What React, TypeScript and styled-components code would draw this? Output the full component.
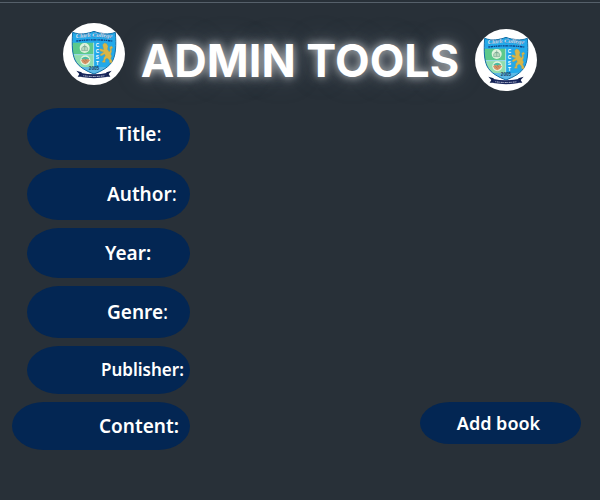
import React, { useId } from "react";
import styled, { createGlobalStyle } from "styled-components";

const GlobalStyle = createGlobalStyle`
  * { box-sizing: border-box; }
  body {
    margin: 0;
    background: #283038;
    color: #fff;
    font-family: "Noto Sans", "Open Sans", sans-serif;
  }
`;

const Page = styled.main`
  min-height: 100vh;
  padding-top: 2px;
`;

const TopRule = styled.hr`
  height: 1px;
  margin: 0;
  border: 0;
  background: #56606a;
`;

const Header = styled.header`
  display: flex;
  justify-content: space-between;
  align-items: flex-start;
  padding: 20px 63px 0;
  height: 105px;
`;

const Logo = styled.svg<{ $drop?: number }>`
  flex: none;
  width: 62px;
  height: 62px;
  margin-top: ${(p) => p.$drop ?? 0}px;
`;

const Title = styled.h1`
  margin: 10px 0 0;
  font-family: Inter, "Liberation Sans", sans-serif;
  font-size: 45px;
  line-height: 56px;
  font-weight: 700;
  white-space: nowrap;
  text-shadow: 0 0 8px rgba(255, 255, 255, 0.6), 0 0 16px rgba(255, 255, 255, 0.3),
    0 0 30px rgba(160, 180, 205, 0.25);
`;

const Form = styled.form`
  display: flex;
  justify-content: space-between;
  align-items: flex-end;
  padding-right: 19px;
`;

const Fields = styled.div`
  flex: 1;
  min-width: 0;
  display: flex;
  flex-direction: column;
  gap: 8px;
`;

const Row = styled.div<{ $wide?: boolean }>`
  display: flex;
  padding-left: ${(p) => (p.$wide ? 12 : 27)}px;
`;

const Label = styled.label<{ $wide?: boolean; $height: number; $indent: number; $size: number }>`
  flex: none;
  display: flex;
  align-items: center;
  width: ${(p) => (p.$wide ? 178 : 163)}px;
  height: ${(p) => p.$height}px;
  padding-left: ${(p) => p.$indent}px;
  border-radius: 32px / 50%;
  background: #032653;
  font-size: ${(p) => p.$size}px;
  line-height: 24px;
  font-weight: 600;
  white-space: nowrap;
`;

const Colon = styled.span<{ $light?: boolean }>`
  font-weight: ${(p) => (p.$light ? 400 : 600)};
`;

const Field = styled.input`
  flex: 1;
  width: 0;
  min-width: 0;
  padding: 0 16px;
  border: 0;
  outline: 0;
  background: transparent;
  color: inherit;
  font: inherit;
`;

const AddButton = styled.button`
  flex: none;
  width: 161px;
  height: 42px;
  margin-bottom: 6px;
  padding: 0 4px 0 0;
  border: 0;
  border-radius: 30px / 50%;
  background: #032653;
  color: #fff;
  font: 600 18px/24px "Noto Sans", "Open Sans", sans-serif;
  cursor: pointer;
`;

const SHIELD =
  "M51 51 C72 59 94 56 115 48 C136 56 158 59 179 51 C182 92 180 116 172 134 C162 155 138 167 115 176 C92 167 68 155 58 134 C50 116 48 92 51 51 Z";

function CollegeLogo({ drop }: { drop?: number }) {
  const id = useId().replace(/[^a-zA-Z0-9]/g, "");
  return (
    <Logo $drop={drop} viewBox="22 23 186 186" role="img" aria-label="Clark College">
      <defs>
        <clipPath id={`${id}s`}>
          <path d={SHIELD} />
        </clipPath>
        <path id={`${id}a`} d="M50 70 Q115 60 180 70" />
      </defs>
      <circle cx="115" cy="116" r="93" fill="#fff" />
      <g clipPath={`url(#${id}s)`}>
        <rect x="45" y="45" width="140" height="135" fill="#23a9ea" />
        <path d="M45 82h69v35H45z" fill="#5cc98b" />
        <path d="M45 119h69v60H45z" fill="#8fdcae" />
        <path d="M114 82v72M45 118h69" stroke="#e5f6ef" strokeWidth="2" fill="none" />
        <path d="M48 152Q115 160 184 152V180H48z" fill="#5eb9e6" />
      </g>
      <path d={SHIELD} fill="none" stroke="#176fa5" strokeWidth="3" />
      <text fill="#fff" stroke="#174d91" strokeWidth=".5" fontFamily="Liberation Serif, serif" fontSize="19" fontWeight="700" fontStyle="italic">
        <textPath href={`#${id}a`} startOffset="50%" textAnchor="middle">
          Clark College
        </textPath>
      </text>
      <path d="M62 77Q115 70 170 77" fill="none" stroke="#123f80" strokeWidth="4" strokeDasharray="5 2 8 2 3 2" />
      <circle cx="87" cy="98" r="15" fill="#dff3dc" />
      <path d="M78 98q9-12 18 0v8H78zM81 94h12M87 87v18" fill="#b9d9bd" stroke="#699b86" strokeWidth="1.5" />
      <circle cx="89" cy="135" r="15" fill="#e5f3dc" />
      <path d="M77 130q12-11 24 0l-4 5H81z" fill="#47bba4" />
      <path d="M76 135l8-5 5 3 6-3 8 5-7 8-7 4-8-4z" fill="#d79366" />
      <path d="M83 135l7 6M88 133l7 5" stroke="#956344" strokeWidth="1.5" />
      <g fill="#fff" fontFamily="Liberation Sans, sans-serif" fontSize="14" fontWeight="700" textAnchor="middle">
        <text x="125" y="94">C</text>
        <text x="125" y="112">C</text>
        <text x="125" y="130">S</text>
        <text x="125" y="148">T</text>
      </g>
      <path
        d="M141 88l5-5 7 2 4 8-2 9 6 8 3-6-2-8 5-4 5 5-5 3 1 9-3 7 3 7-3 6 4 7v6h-7l-1-8-7-6-6 5 1 8h-8l-1-3 4-3 0-8 5-5-2-6-9 5-5-1 2-4 9-6-9-2-4-5 4-3 9 3-1-5z"
        fill="#d9b647"
        stroke="#a79a4f"
        strokeWidth="1"
      />
      <path d="M62 166l16 5v13H66l5-8zM168 166l-16 5v13h12l-5-8z" fill="#101f4e" />
      <path d="M74 172Q115 181 156 172l-3 13Q115 192 77 185z" fill="#18265c" />
      <path d="M83 181Q115 186 148 181" fill="none" stroke="#c9cede" strokeWidth="3" strokeDasharray="3 2 5 2" />
      <text x="115" y="164" fill="#17395b" fontFamily="Liberation Sans, sans-serif" fontSize="14" fontWeight="700" textAnchor="middle">
        2005
      </text>
    </Logo>
  );
}

const FIELDS = [
  { name: "Title", height: 52, indent: 89, size: 19, light: true },
  { name: "Author", height: 52, indent: 80, size: 19, light: true },
  { name: "Year", height: 50, indent: 78, size: 19 },
  { name: "Genre", height: 52, indent: 80, size: 19, light: true },
  { name: "Publisher", height: 48, indent: 74, size: 17 },
  { name: "Content", height: 48, indent: 87, size: 19, wide: true },
];

export default function App() {
  return (
    <Page>
      <GlobalStyle />
      <TopRule />
      <Header>
        <CollegeLogo />
        <Title>ADMIN TOOLS</Title>
        <CollegeLogo drop={6} />
      </Header>
      <Form onSubmit={(e) => e.preventDefault()}>
        <Fields>
          {FIELDS.map((f) => (
            <Row key={f.name} $wide={f.wide}>
              <Label htmlFor={f.name} $wide={f.wide} $height={f.height} $indent={f.indent} $size={f.size}>
                {f.name}
                <Colon $light={f.light}>:</Colon>
              </Label>
              <Field id={f.name} name={f.name} type="text" />
            </Row>
          ))}
        </Fields>
        <AddButton type="submit">Add book</AddButton>
      </Form>
    </Page>
  );
}
